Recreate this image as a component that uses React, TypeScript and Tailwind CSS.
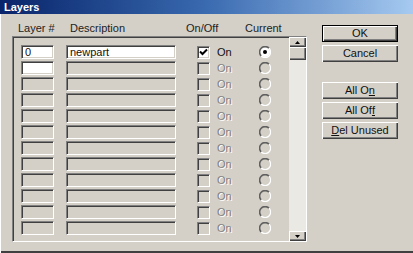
import React from 'react';

const sunken =
  'border border-t-[#808080] border-l-[#808080] border-r-white border-b-white shadow-[inset_1px_1px_0_#404040,inset_-1px_-1px_0_#d4d0c8]';
const raised =
  'shadow-[inset_1px_1px_0_#ffffff,inset_-1px_-1px_0_#404040,inset_-2px_-2px_0_#808080]';

const Check = ({ on }: { on: boolean }) => (
  <div className={`w-[13px] h-[13px] shrink-0 flex items-center justify-center ${sunken} ${on ? 'bg-white' : 'bg-[#d4d0c8]'}`}>
    {on && (
      <svg width="9" height="9" viewBox="0 0 9 9">
        <path d="M1 3.5 L3.5 6 L8 1.5" stroke="#000" strokeWidth="2" fill="none" />
      </svg>
    )}
  </div>
);

const Radio = ({ on }: { on: boolean }) => (
  <svg width="12" height="12" viewBox="0 0 12 12">
    <circle cx="6" cy="6" r="5" fill={on ? '#fff' : '#d4d0c8'} />
    <path d="M2.2 10 A5 5 0 0 1 10 2.2" stroke="#606060" strokeWidth="1.6" fill="none" />
    <path d="M10 2.2 A5 5 0 0 1 2.2 10" stroke="#ffffff" strokeWidth="1.2" fill="none" />
    {on && <circle cx="6" cy="6" r="2" fill="#000" />}
  </svg>
);

const Btn = ({ children, def }: { children: React.ReactNode; def?: boolean }) => (
  <div
    className={`w-[76px] h-[17px] flex items-center justify-center text-[11px] text-[#111] bg-[#d4d0c8] ${
      def ? 'border border-black shadow-[inset_1px_1px_0_#ffffff,inset_-1px_-1px_0_#404040,inset_-2px_-2px_0_#808080]' : raised
    }`}
  >
    {children}
  </div>
);

const rows = Array.from({ length: 12 }, (_, i) => i);

export default function App() {
  return (
    <div
      className="w-[413px] h-[253px] bg-[#d4d0c8] flex flex-col overflow-hidden shadow-[inset_1px_0_0_#ffffff,inset_0_-2px_0_#404040]"
      style={{ fontFamily: '"Liberation Sans", Arial, sans-serif' }}
    >
      <div className="h-[14px] shrink-0 bg-gradient-to-r from-[#0a246a] via-[#3a6ab0] to-[#a6caf0] flex items-center pl-[4px]">
        <span className="text-white font-bold text-[11px] leading-none">Layers</span>
      </div>

      <div className="flex pt-[6px] pl-[12px]">
        {/* left: headers + list */}
        <div className="w-[295px] flex flex-col">
          <div className="h-[16px] flex items-start pl-[6px] pt-[1px] text-[11px] text-[#222] leading-[14px]">
            <span className="w-[52px]">Layer #</span>
            <span className="w-[116px]">Description</span>
            <span className="w-[59px]">On/Off</span>
            <span>Current</span>
          </div>

          <div className={`h-[206px] flex ${sunken}`}>
            <div className="flex flex-col pl-[8px] pt-[7px]">
              {rows.map(i => (
                <div key={i} className="h-[16px] flex items-center">
                  <div className={`w-[33px] h-[14px] ${sunken} ${i < 2 ? 'bg-white' : 'bg-[#d4d0c8]'} text-[11px] leading-[12px] pl-[3px] text-[#111]`}>
                    {i === 0 ? '0' : ''}
                  </div>
                  <div className={`ml-[12px] w-[110px] h-[14px] ${sunken} ${i === 0 ? 'bg-white' : 'bg-[#d4d0c8]'} text-[11px] leading-[12px] pl-[3px] text-[#111]`}>
                    {i === 0 ? 'newpart' : ''}
                  </div>
                  <div className="ml-[21px] w-[62px] flex items-center">
                    <Check on={i === 0} />
                    <span
                      className={`ml-[7px] text-[11px] leading-none ${
                        i === 0 ? 'text-[#111]' : 'text-[#808080] text-shadow-[1px_1px_0_#ffffff]'
                      }`}
                    >
                      On
                    </span>
                  </div>
                  <Radio on={i === 0} />
                </div>
              ))}
            </div>

            <div className="ml-auto w-[17px] h-full flex flex-col bg-[#ebe9e4]">
              <div className={`h-[10px] bg-[#d4d0c8] flex items-center justify-center ${raised}`}>
                <svg width="5" height="3" viewBox="0 0 5 3"><path d="M0 3 L2.5 0 L5 3 Z" fill="#000" /></svg>
              </div>
              <div className={`h-[13px] bg-[#d4d0c8] ${raised}`} />
              <div className="flex-1" />
              <div className={`h-[10px] bg-[#d4d0c8] flex items-center justify-center ${raised}`}>
                <svg width="5" height="3" viewBox="0 0 5 3"><path d="M0 0 L5 0 L2.5 3 Z" fill="#000" /></svg>
              </div>
            </div>
          </div>
        </div>

        {/* right: buttons */}
        <div className="ml-[15px] pt-[5px] flex flex-col gap-[3px]">
          <Btn def>OK</Btn>
          <Btn>Cancel</Btn>
          <div className="h-[14px]" />
          <Btn>
            All O<span className="underline">n</span>
          </Btn>
          <Btn>
            All Of<span className="underline">f</span>
          </Btn>
          <Btn>
            <span className="underline">D</span>el Unused
          </Btn>
        </div>
      </div>
    </div>
  );
}
